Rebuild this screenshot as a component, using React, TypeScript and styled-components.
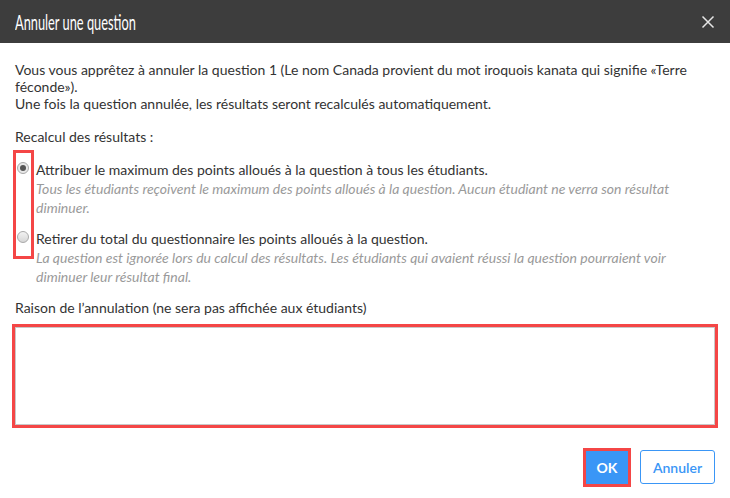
import React, { useState } from 'react'
import styled, { createGlobalStyle } from 'styled-components'

const Global = createGlobalStyle`
  html, body {
    margin: 0;
    padding: 0;
    background: #ffffff;
  }
  body {
    font-family: Lato, "Open Sans", "Liberation Sans", sans-serif;
    color: #333333;
  }
`

const Dialog = styled.div`
  width: 730px;
  height: 498px;
  background: #fff;
  display: flex;
  flex-direction: column;
`

const Header = styled.div`
  height: 43px;
  background: #3d3d3d;
  display: flex;
  align-items: center;
  justify-content: space-between;
  padding: 0 15px 0 15px;
  box-sizing: border-box;
`

const Title = styled.h1`
  margin: 0;
  font-size: 21px;
  font-weight: 400;
  color: #ffffff;
  transform: scaleX(0.61);
  transform-origin: left center;
  white-space: nowrap;
`

const CloseBtn = styled.button`
  background: none;
  border: none;
  padding: 0;
  width: 14px;
  height: 14px;
  display: flex;
  cursor: pointer;
`

const Body = styled.div`
  padding: 18px 15px 0 15px;
  display: flex;
  flex-direction: column;
  font-size: 14px;
  line-height: 19px;
`

const Intro = styled.p`
  margin: 0;
  line-height: 17px;
`

const SectionLabel = styled.div`
  margin-top: 15px;
`

const Options = styled.div`
  position: relative;
  display: flex;
  flex-direction: column;
  gap: 12px;
  margin-top: 14px;
`

const Highlight = styled.div`
  position: absolute;
  left: -2px;
  top: -10px;
  width: 21px;
  height: 109px;
  border: 3px solid #f44646;
  box-sizing: border-box;
  pointer-events: none;
`

const Option = styled.label`
  display: flex;
  align-items: flex-start;
  gap: 7px;
  cursor: pointer;
`

const Radio = styled.span<{ $checked: boolean }>`
  flex: none;
  width: 12px;
  height: 12px;
  margin-top: 2px;
  margin-left: 2px;
  border-radius: 50%;
  box-sizing: border-box;
  border: 1px solid #a9a9a9;
  background: ${p => (p.$checked ? '#e8e8e8' : 'linear-gradient(#f2f2f2, #d6d6d6)')};
  display: flex;
  align-items: center;
  justify-content: center;
  &::after {
    content: '';
    width: 6px;
    height: 6px;
    border-radius: 50%;
    background: #555;
    display: ${p => (p.$checked ? 'block' : 'none')};
  }
`

const OptionText = styled.div`
  display: flex;
  flex-direction: column;
`

const Hint = styled.span`
  font-style: italic;
  color: #9a9a9a;
`

const ReasonLabel = styled.div`
  margin-top: 12px;
  margin-bottom: 10px;
`

const TextArea = styled.textarea`
  height: 98px;
  margin: 0;
  border: 1px solid #c8c8c8;
  outline: 3px solid #f44646;
  resize: none;
  font: inherit;
  padding: 6px;
  box-sizing: border-box;
`

const Footer = styled.div`
  display: flex;
  justify-content: flex-end;
  align-items: flex-start;
  gap: 12px;
  padding: 25px 15px 0 0;
`

const OkButton = styled.button`
  width: 42px;
  height: 33px;
  border: none;
  border-radius: 0;
  background: #3a96f6;
  color: #fff;
  font: inherit;
  font-weight: 700;
  font-size: 14px;
  outline: 3px solid #f44646;
  margin-top: 1px;
  cursor: pointer;
`

const CancelButton = styled.button`
  width: 75px;
  height: 34px;
  border: 1px solid #3a96f6;
  border-radius: 3px;
  background: #fff;
  color: #3a96f6;
  font: inherit;
  font-weight: 600;
  font-size: 14px;
  cursor: pointer;
`

export default function App() {
  const [choice, setChoice] = useState(0)
  const options = [
    {
      label: 'Attribuer le maximum des points alloués à la question à tous les étudiants.',
      hint: 'Tous les étudiants reçoivent le maximum des points alloués à la question. Aucun étudiant ne verra son résultat diminuer.',
    },
    {
      label: 'Retirer du total du questionnaire les points alloués à la question.',
      hint: 'La question est ignorée lors du calcul des résultats. Les étudiants qui avaient réussi la question pourraient voir diminuer leur résultat final.',
    },
  ]
  return (
    <Dialog>
      <Global />
      <Header>
        <Title>Annuler une question</Title>
        <CloseBtn aria-label="Fermer">
          <svg width="14" height="14" viewBox="0 0 14 14">
            <path d="M1.5 1.5 L12.5 12.5 M12.5 1.5 L1.5 12.5" stroke="#e6e6e6" strokeWidth="1.5" />
          </svg>
        </CloseBtn>
      </Header>
      <Body>
        <Intro>
          Vous vous apprêtez à annuler la question 1 (Le nom Canada provient du mot iroquois kanata qui signifie «Terre féconde»).
          <br />
          Une fois la question annulée, les résultats seront recalculés automatiquement.
        </Intro>
        <SectionLabel>Recalcul des résultats :</SectionLabel>
        <Options>
          <Highlight />
          {options.map((o, i) => (
            <Option key={i} onClick={() => setChoice(i)}>
              <Radio $checked={choice === i} />
              <OptionText>
                <span>{o.label}</span>
                <Hint>{o.hint}</Hint>
              </OptionText>
            </Option>
          ))}
        </Options>
        <ReasonLabel>Raison de l’annulation (ne sera pas affichée aux étudiants)</ReasonLabel>
        <TextArea />
      </Body>
      <Footer>
        <OkButton>OK</OkButton>
        <CancelButton>Annuler</CancelButton>
      </Footer>
    </Dialog>
  )
}
